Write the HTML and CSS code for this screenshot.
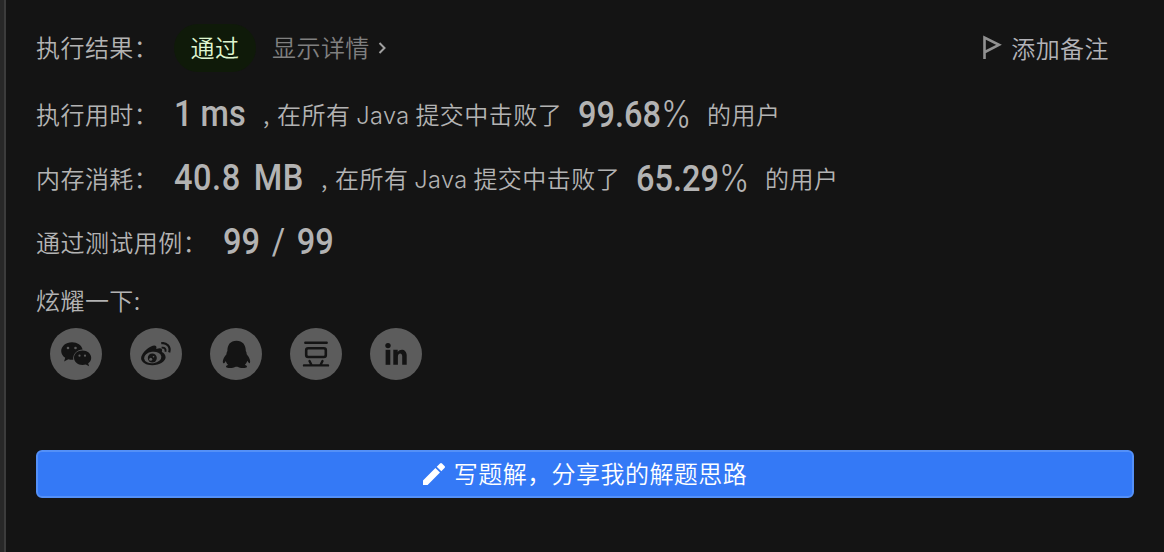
FILE: index.html
```html
<!DOCTYPE html>
<html lang="zh-CN">

<head>
    <meta charset="UTF-8">
    <meta name="viewport" content="width=device-width, initial-scale=1.0">
    <title>执行结果</title>
    <link rel="stylesheet" href="styles.css">
</head>

<body>
    <main class="panel">
        <!-- 执行结果 -->
        <div class="row status">
            <span class="label">执行结果：</span>
            <span class="badge">通过</span>
            <a class="detail">显示详情
                <svg width="8" height="14" viewBox="0 0 8 14"><path d="M1.5 2l5 5-5 5" fill="none" stroke="currentColor" stroke-width="2"/></svg>
            </a>
            <a class="note">
                <svg width="20" height="26" viewBox="0 0 20 26"><path d="M2.5 24V2.500L17 9.800 3 17" fill="none" stroke="currentColor" stroke-width="2.6"/></svg>
                添加备注
            </a>
        </div>

        <!-- 统计数据 -->
        <div class="row">
            <span class="label">执行用时：</span>
            <span class="number time"><span class="glyphs">1 ms</span></span>
            <span class="comma">,</span>
            <span class="text">在所有 <span class="java">Java</span> 提交中击败了</span>
            <span class="number rate"><span class="glyphs">99.68<span class="percent">%</span></span></span>
            <span class="text">的用户</span>
        </div>
        <div class="row">
            <span class="label">内存消耗：</span>
            <span class="number memory"><span class="glyphs">40.8 MB</span></span>
            <span class="comma">,</span>
            <span class="text">在所有 <span class="java">Java</span> 提交中击败了</span>
            <span class="number rate"><span class="glyphs">65.29<span class="percent">%</span></span></span>
            <span class="text">的用户</span>
        </div>
        <div class="row">
            <span class="label cases">通过测试用例：</span>
            <span class="number total"><span class="glyphs">99 <span class="slash">/</span> 99</span></span>
        </div>

        <!-- 分享 -->
        <div class="share-title">炫耀一下:</div>
        <div class="share">
            <a class="social">
                <svg viewBox="0 0 52 52">
                    <path class="ink" d="M22 14.2c-6.2 0-10.8 4-10.8 8.8 0 2.800 1.500 5.100 4 6.800l-1.100 3.600 4.200-2.200c1.700.5 3.300.7 5 .6-.9-6 4-10.200 9.300-10.300-1-4.300-5.200-7.300-10.600-7.300z"/>
                    <path class="ink" d="M32.500 22.500c-5 0-8.500 3.200-8.500 7.200s3.600 7.200 8.500 7.200c1.200 0 2.300-.2 3.300-.5l3.300 1.800-.9-2.900c1.900-1.400 3-3.300 3-5.600 0-4-3.800-7.200-8.700-7.200z"/>
                    <circle cx="18" cy="20" r="1.300"/><circle cx="25.500" cy="20" r="1.300"/>
                    <circle cx="29.500" cy="27.700" r="1.100"/><circle cx="35" cy="27.700" r="1.100"/>
                </svg>
            </a>
            <a class="social">
                <svg viewBox="0 0 52 52">
                    <path class="ink" d="M31.800 24c1.200-3.200-.8-5-5.500-3 .9-3.600-1.600-4.300-5.300-2.500-5 2.400-9.900 8-9.900 11.800 0 4.200 5.300 7 11.200 7 7.500 0 13.300-4.200 13.300-8 0-2.700-1.800-4.300-3.800-5.300z"/>
                    <ellipse cx="22.700" cy="29.500" rx="8.700" ry="5.700" transform="rotate(-7 22.700 29.500)"/>
                    <circle class="ink" cx="22.300" cy="30" r="4.500"/>
                    <circle cx="20.700" cy="31.200" r="1.500"/><circle cx="23.500" cy="28.800" r=".8"/>
                    <path class="line" d="M31.200 15.300c5.300-1.200 9.800 3.500 8 9" stroke-width="2.200"/>
                    <path class="line" d="M31.700 19.700c3-.5 4.500 1.500 3.700 4" stroke-width="1.900"/>
                </svg>
            </a>
            <a class="social">
                <svg viewBox="0 0 52 52">
                    <path class="ink" d="M26.500 12.700c-6.200 0-9.300 4.200-9.100 10.400-.5 1.200-1 2-.9 3.100-3 3.500-4.300 7-3.300 8.900.6.700 1.600-.4 2.600-2.200.5 1.600 1.200 2.900 2.500 4-1.700.4-2.600 1.100-2.200 2.100.8 1.400 7.300 1.300 9.500-.3h1.900c2.300 1.600 8.800 1.600 9.400.2.400-.9-.5-1.600-2.100-2 1.200-1.100 2.100-2.500 2.600-4.100 1 1.900 2 2.900 2.500 2.100.9-1.800-.3-5.200-3.200-8.700.1-1-.3-2-.9-3.100.2-6.200-3.300-10.400-9.300-10.400z"/>
                </svg>
            </a>
            <a class="social">
                <svg viewBox="0 0 52 52">
                    <path class="line" d="M15.300 14.700h21.400M14 37.400h24M19.500 33l2 4M32.500 33l-2 4" stroke-width="2.400" stroke-linecap="round"/>
                    <rect class="line" x="16.200" y="20.200" width="19.600" height="8.800" rx="2" stroke-width="2.600"/>
                </svg>
            </a>
            <a class="social">
                <svg viewBox="0 0 52 52">
                    <circle class="ink" cx="18" cy="17.600" r="2.700"/>
                    <rect class="ink" x="15.600" y="21.800" width="4.700" height="15"/>
                    <path class="ink" d="M23.300 21.800h4.400v2.100c2.300-3.700 9-3.100 9 3.400v9.500h-4.500v-8.500c0-4.200-4.300-3.500-4.300.1v8.400h-4.600z"/>
                </svg>
            </a>
        </div>

        <button class="write">
            <svg width="22" height="22" viewBox="0 0 22 22"><path d="M0 17.400V22h4.600L17 9.600 12.400 5zM13.700 3.700L17 .5q1-1 2 0L21.500 3q1 1 0 2l-3.200 3.300z" fill="#fff"/></svg>
            <span class="caption">写题解，分享我的解题思路</span>
        </button>
    </main>
</body>

</html>
```

FILE: styles.css
```css
* {
    box-sizing: border-box;
}

body {
    margin: 0;
    height: 552px;
    background: #141414;
    border-left: 4px solid #282828;
    color: #b3b3b3;
    font-family: "Noto Sans CJK SC", sans-serif;
    font-size: 24px;
    font-weight: 350;
    letter-spacing: 0.45px;
    overflow: hidden;
}

.panel {
    height: 552px;
    border-left: 2px solid #3c3c3c;
    padding: 24px 30px 0;
}

.row {
    display: flex;
    align-items: flex-start;
    height: 64px;
    line-height: 64px;
    white-space: nowrap;
}

.label {
    width: 138px;
}

.cases {
    width: 187px;
}

/* 第一行 */
.status {
    height: 48px;
    line-height: 46px;
    margin-bottom: 10px;
}

.badge {
    width: 82px;
    height: 48px;
    border-radius: 24px;
    background: #0f1a09;
    color: #dff5d0;
    text-align: center;
}

.detail {
    display: flex;
    align-items: center;
    gap: 8px;
    margin-left: 16px;
    color: #808080;
}

.detail svg {
    color: #a0a0a0;
    margin-top: 2px;
}

.note {
    display: flex;
    align-items: center;
    gap: 9px;
    margin-left: auto;
    margin-right: 25px;
    line-height: 48px;
    color: #b3b3b8;
}

.note svg {
    color: #919191;
}

/* 数字 */
.number {
    font-family: Roboto, sans-serif;
    font-size: 37px;
    font-weight: 500;
    letter-spacing: 0;
}

.glyphs {
    display: inline-block;
    transform: scaleX(0.88);
    transform-origin: left;
}

.percent {
    font-family: Inter, sans-serif;
    font-weight: 300;
}

.slash {
    font-weight: 400;
}

.time {
    width: 89px;
}

.memory {
    width: 147px;
    letter-spacing: 0.6px;
    word-spacing: 5px;
}

.total {
    word-spacing: 4px;
}

.rate {
    width: 129px;
}

.comma {
    width: 14px;
}

.text + .number {
    margin-left: 16px;
}

.java {
    font-family: Inter, sans-serif;
    font-weight: 300;
    font-size: 23.5px;
}

/* 分享按钮 */
.share-title {
    height: 54px;
    line-height: 51px;
}

.share {
    display: flex;
    gap: 28px;
    padding-left: 14px;
}

.social {
    width: 52px;
    height: 52px;
    border-radius: 50%;
    background: #5c5c5c;
}

.social svg {
    display: block;
    fill: #5c5c5c;
}

.social .ink {
    fill: #141414;
}

.social .line {
    fill: none;
    stroke: #141414;
}

.write {
    display: flex;
    align-items: center;
    justify-content: center;
    gap: 9px;
    width: 100%;
    height: 48px;
    margin-top: 70px;
    padding: 0;
    border: 2px solid #5490f7;
    border-radius: 6px;
    background: #3479f6;
    color: #fff;
    font: inherit;
    letter-spacing: inherit;
}

.caption {
    padding-bottom: 3px;
}
```
